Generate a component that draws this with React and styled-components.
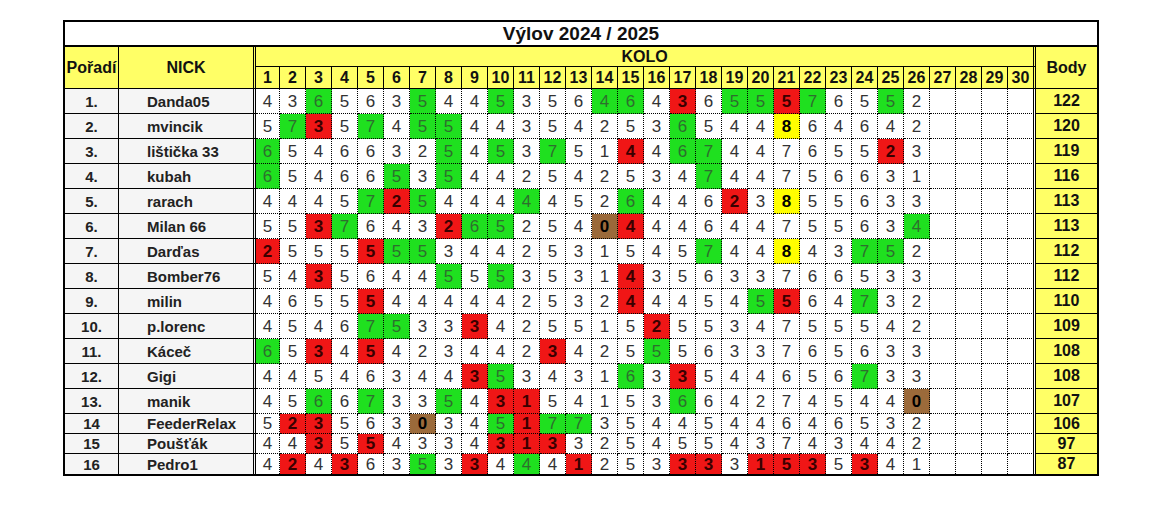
import React from "react";
import styled, { createGlobalStyle, css } from "styled-components";

const GlobalStyle = createGlobalStyle`
  html, body { margin: 0; padding: 0; background: #fff; }
  body { font-family: "Liberation Sans", Arial, sans-serif; }
`;

const rows = [
  ["1.", "Danda05", "4 3 6g 5 6 3 5g 4 4 5g 3 5 6 4g 6g 4 3r 6 5g 5g 5r 7g 6 5 5g 2", 122],
  ["2.", "mvincik", "5 7g 3r 5 7g 4 5g 5g 4 4 3 5 4 2 5 3 6g 5 4 4 8y 6 4 6 4 2", 120],
  ["3.", "lištička 33", "6g 5 4 6 6 3 2 5g 4 5g 3 7g 5 1 4r 4 6g 7g 4 4 7 6 5 5 2r 3", 119],
  ["4.", "kubah", "6g 5 4 6 6 5g 3 5g 4 4 2 5 4 2 5 3 4 7g 4 4 7 5 6 6 3 1", 116],
  ["5.", "rarach", "4 4 4 5 7g 2r 5g 4 4 4 4g 4 5 2 6g 4 4 6 2r 3 8y 5 5 6 3 3", 113],
  ["6.", "Milan 66", "5 5 3r 7g 6 4 3 2r 6g 5g 2 5 4 0b 4r 4 4 6 4 4 7 5 5 6 3 4g", 113],
  ["7.", "Darďas", "2r 5 5 5 5r 5g 5g 3 4 4 2 5 3 1 5 4 5 7g 4 4 8y 4 3 7g 5g 2", 112],
  ["8.", "Bomber76", "5 4 3r 5 6 4 4 5g 5 5g 3 5 3 1 4r 3 5 6 3 3 7 6 6 5 3 3", 112],
  ["9.", "milin", "4 6 5 5 5r 4 4 4 4 4 2 5 3 2 4r 4 4 5 4 5g 5r 6 4 7g 3 2", 110],
  ["10.", "p.lorenc", "4 5 4 6 7g 5g 3 3 3r 4 2 5 5 1 5 2r 5 5 3 4 7 5 5 5 4 2", 109],
  ["11.", "Káceč", "6g 5 3r 4 5r 4 2 3 4 4 2 3r 4 2 5 5g 5 6 3 3 7 6 5 6 3 3", 108],
  ["12.", "Gigi", "4 4 5 4 6 3 4 4 3r 5g 3 4 3 1 6g 3 3r 5 4 4 6 5 6 7g 3 3", 108],
  ["13.", "manik", "4 5 6g 6 7g 3 3 5g 4 3r 1r 5 4 1 5 3 6g 6 4 2 7 4 5 4 4 0b", 107],
  ["14", "FeederRelax", "5 2r 3r 5 6 3 0b 3 4 5g 1r 7g 7g 3 5 4 4 5 4 4 6 4 6 5 3 2", 106],
  ["15", "Poušťák", "4 4 3r 5 5r 4 3 3 4 3r 1r 3r 3 2 5 4 5 5 4 3 7 4 3 4 4 2", 97],
  ["16", "Pedro1", "4 2r 4 3r 6 3 5g 3 3r 4 4g 4 1r 2 5 3 3r 3r 3 1r 5r 3r 5 3r 4 1", 87],
];

const ROUNDS = 30;

const fills = {
  g: { bg: "#1fe01f", fg: "#2e6e2e", w: 400 },
  r: { bg: "#f01616", fg: "#3a0000", w: 700 },
  y: { bg: "#ffff00", fg: "#000", w: 700 },
  b: { bg: "#9b6a3a", fg: "#000", w: 700 },
  n: { bg: "#fff", fg: "#333", w: 400 },
};

const Page = styled.div`
  padding: 20px 0 0 63px;
`;

const Sheet = styled.div`
  display: grid;
  grid-template-columns: 54px 137px 24px repeat(28, 26px) 28px 61px;
  grid-template-rows: 25px 20px 22px repeat(13, 25px) repeat(3, 20px);
  width: max-content;
  border: 2px solid #000;
  color: #222;
  font-family: "Liberation Sans", Arial, sans-serif;
`;

const Cell = styled.div`
  box-sizing: border-box;
  display: flex;
  align-items: center;
  justify-content: center;
  overflow: hidden;
  white-space: nowrap;
  line-height: 1;
`;

const Title = styled(Cell)`
  grid-column: 1 / -1;
  border-bottom: 2px solid #000;
  font-size: 19px;
  font-weight: 700;
  color: #111;
  background: #fff;
`;

const HeadCell = styled(Cell)`
  grid-row: 2 / 4;
  background: #ffff66;
  border-bottom: 1px solid #000;
  font-size: 16px;
  font-weight: 700;
  color: #111;
  ${(p) =>
    p.$edge === "double" &&
    css`
      border-right: 3px double #000;
    `}
  ${(p) =>
    p.$edge === "solid" &&
    css`
      border-right: 1px solid #000;
    `}
`;

const Kolo = styled(Cell)`
  grid-row: 2;
  grid-column: 3 / 33;
  background: #ffff66;
  border-bottom: 1px solid #000;
  border-right: 3px double #000;
  font-size: 16px;
  font-weight: 700;
  color: #111;
`;

const RoundHead = styled(Cell)`
  background: #ffff66;
  border-bottom: 1px solid #000;
  border-right: ${(p) => (p.$last ? "3px double #000" : "1px solid #000")};
  font-size: 16px;
  font-weight: 700;
  color: #111;
`;

const RankCell = styled(Cell)`
  background: #f5f5f5;
  border-right: 1px solid #000;
  border-bottom: ${(p) => (p.$end ? "none" : "1px solid #000")};
  font-size: 15px;
  font-weight: 700;
`;

const NickCell = styled(Cell)`
  justify-content: flex-start;
  padding-left: 28px;
  background: #f5f5f5;
  border-right: 3px double #000;
  border-bottom: ${(p) => (p.$end ? "none" : "1px solid #000")};
  font-size: 15px;
  font-weight: 700;
`;

const Score = styled(Cell)`
  background: ${(p) => fills[p.$fill].bg};
  color: ${(p) => fills[p.$fill].fg};
  font-weight: ${(p) => fills[p.$fill].w};
  font-size: 17px;
  border-right: ${(p) => (p.$last ? "3px double #000" : "1px dotted #000")};
  border-bottom: ${(p) => (p.$end ? "none" : "1px dotted #000")};
`;

const BodyCell = styled(Cell)`
  background: #ffff66;
  border-bottom: ${(p) => (p.$end ? "none" : "1px solid #000")};
  font-size: 16px;
  font-weight: 700;
  color: #111;
`;

function parse(str) {
  const tokens = str.split(" ").map((t) => ({ v: t[0], f: t[1] || "n" }));
  while (tokens.length < ROUNDS) tokens.push({ v: "", f: "n" });
  return tokens;
}

export default function App() {
  return (
    <>
      <GlobalStyle />
      <Page>
        <Sheet>
          <Title>Výlov 2024 / 2025</Title>
          <HeadCell $edge="solid" style={{ gridColumn: 1 }}>Pořadí</HeadCell>
          <HeadCell $edge="double" style={{ gridColumn: 2 }}>NICK</HeadCell>
          <Kolo>KOLO</Kolo>
          <HeadCell style={{ gridColumn: 33 }}>Body</HeadCell>
          {Array.from({ length: ROUNDS }, (_, i) => (
            <RoundHead key={`h${i}`} $last={i === ROUNDS - 1}>
              {i + 1}
            </RoundHead>
          ))}
          {rows.map(([rank, nick, scores, total], ri) => {
            const end = ri === rows.length - 1;
            return (
              <React.Fragment key={nick}>
                <RankCell $end={end}>{rank}</RankCell>
                <NickCell $end={end}>{nick}</NickCell>
                {parse(scores).map((s, ci) => (
                  <Score key={ci} $fill={s.f} $last={ci === ROUNDS - 1} $end={end}>
                    {s.v}
                  </Score>
                ))}
                <BodyCell $end={end}>{total}</BodyCell>
              </React.Fragment>
            );
          })}
        </Sheet>
      </Page>
    </>
  );
}
